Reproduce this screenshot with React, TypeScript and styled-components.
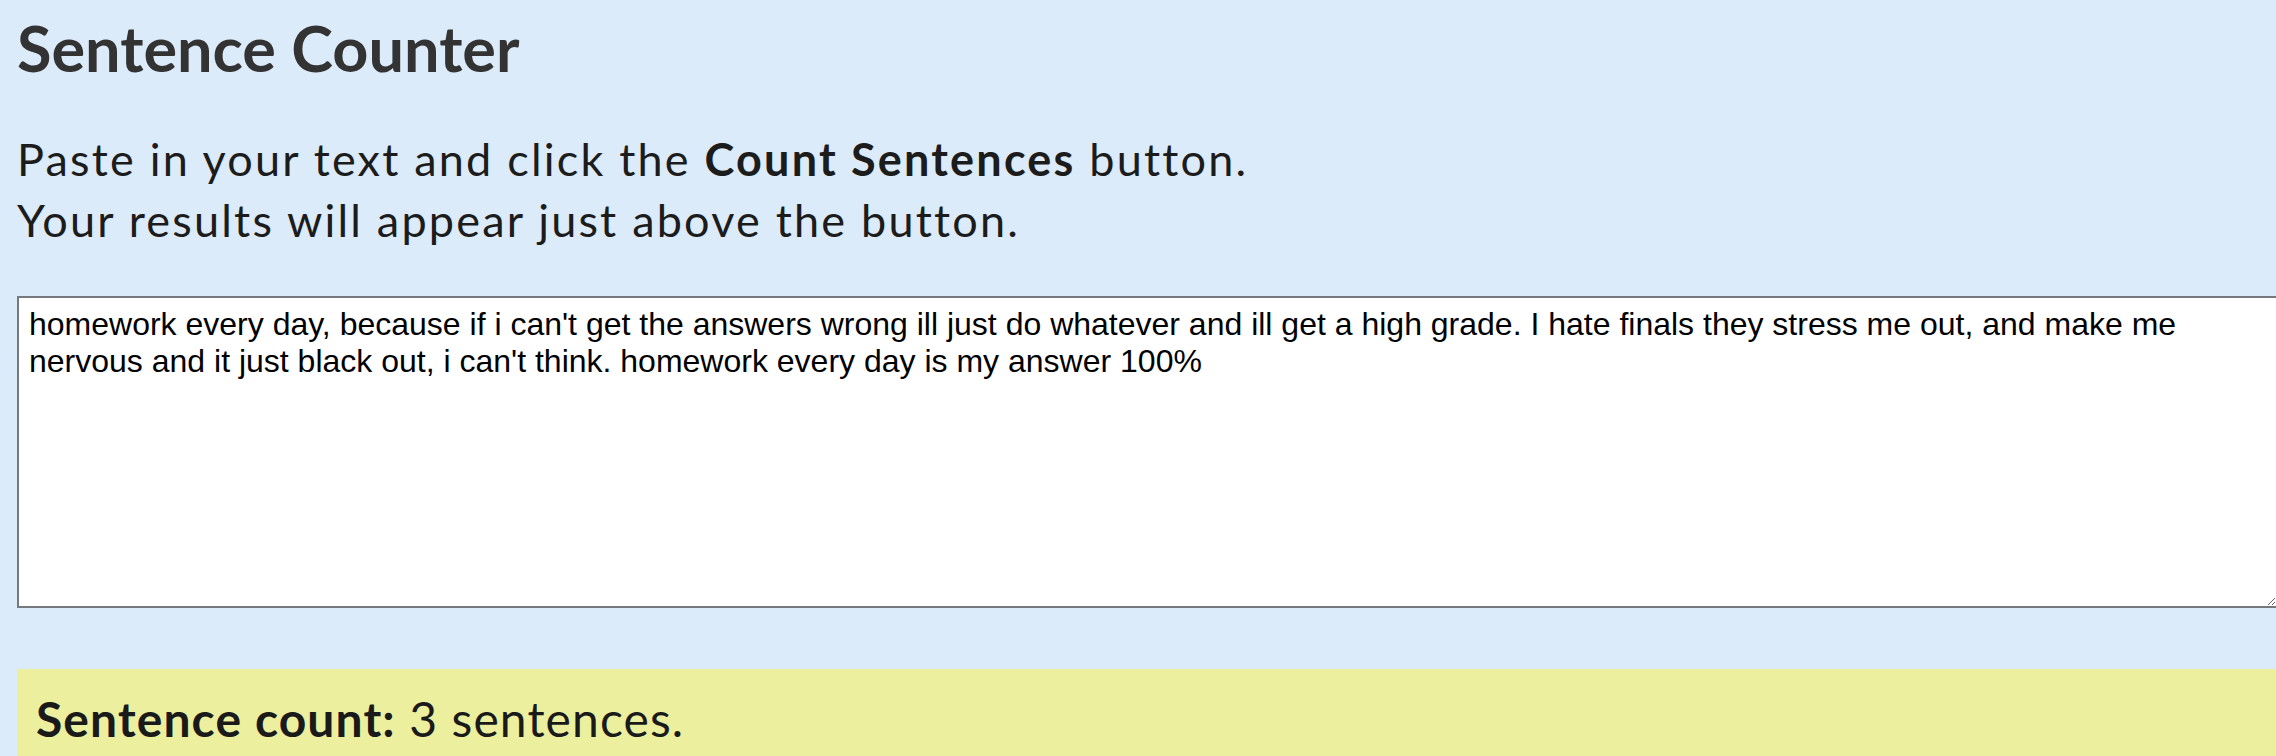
import styled, { createGlobalStyle } from 'styled-components';

const GlobalStyle = createGlobalStyle`
  html, body {
    margin: 0;
    padding: 0;
    background: #dcebf9;
    overflow: hidden;
  }
`;

const Page = styled.main`
  padding: 8px 0 0 17px;
  font-family: Lato, 'Open Sans', sans-serif;
`;

const Title = styled.h1`
  margin: 0 0 41px;
  font-size: 63px;
  line-height: 80px;
  font-weight: 700;
  color: #333333;
`;

const Intro = styled.p`
  margin: 0 0 45px;
  font-size: 45px;
  line-height: 61px;
  letter-spacing: 2.2px;
  color: #1c1c1c;
`;

const TextBox = styled.textarea`
  display: block;
  box-sizing: border-box;
  width: 2261px;
  height: 312px;
  margin: 0 0 61px;
  padding: 8px 10px;
  border: 2px solid #75797d;
  background: #ffffff;
  font-family: 'Liberation Sans', Arial, sans-serif;
  font-size: 32px;
  line-height: 37px;
  color: #000000;
  outline: none;
`;

const Result = styled.div`
  padding: 20px 19px 30px;
  background: #ecef9e;
  font-size: 48px;
  line-height: 60px;
  letter-spacing: 1.1px;
  color: #1a1a1a;
`;

const sample =
  "homework every day, because if i can't get the answers wrong ill just do whatever and ill get a high grade. I hate finals they stress me out, and make me nervous and it just black out, i can't think. homework every day is my answer 100%";

export default function App() {
  return (
    <>
      <GlobalStyle />
      <Page>
        <Title>Sentence Counter</Title>
        <Intro>
          Paste in your text and click the <strong>Count Sentences</strong> button.
          <br />
          Your results will appear just above the button.
        </Intro>
        <TextBox defaultValue={sample} />
        <Result>
          <strong>Sentence count:</strong> 3 sentences.
        </Result>
      </Page>
    </>
  );
}
